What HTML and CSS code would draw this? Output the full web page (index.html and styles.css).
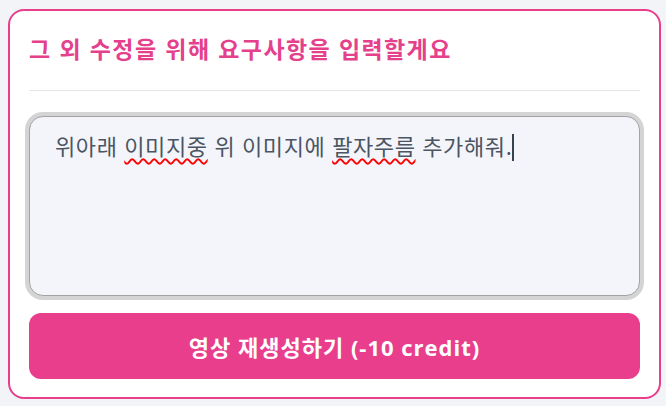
FILE: index.html
```html
<!DOCTYPE html>
<html lang="ko">
<head>
<meta charset="utf-8">
<link rel="stylesheet" href="styles.css">
</head>
<body>
<div class="card">
  <div class="header">
    <h2 class="title">그 외 수정을 위해 요구사항을 입력할게요</h2>
  </div>
  <div class="field">
    <div class="input">위아래 <span class="misspell">이미지중</span> 위 이미지에 <span class="misspell">팔자주름</span> 추가해줘.<span class="caret"></span></div>
  </div>
  <button class="submit">영상 재생성하기 (-10 credit)</button>
</div>
</body>
</html>
```
FILE: styles.css
```css
* { box-sizing: border-box; }
html, body { margin: 0; padding: 0; }
body {
  background: #f3f4f8;
  padding: 9px 5px 0 8px;
  font-family: "Noto Sans CJK KR", "Noto Sans", sans-serif;
}
.card {
  width: 653px;
  height: 390px;
  background: #ffffff;
  border: 2px solid #e83e8c;
  border-radius: 16px;
  padding: 0 19px 18px 19px;
  display: flex;
  flex-direction: column;
}
.header {
  padding: 22px 0 27px 0;
  border-bottom: 1px solid #e5e7eb;
}
.title {
  margin: 0;
  font-size: 23px;
  line-height: 30px;
  font-weight: 700;
  letter-spacing: 1.4px;
  color: #e5408b;
}
.field {
  margin-top: 25px;
}
.input {
  height: 180px;
  background: #f4f5fa;
  border: 1px solid #a3a3a3;
  border-radius: 14px;
  box-shadow: 0 0 0 4px #d4d4d4;
  padding: 14px 25px;
  font-size: 22px;
  line-height: 28px;
  letter-spacing: 0.6px;
  color: #4b5563;
}
.misspell {
  text-decoration: underline wavy #ff0000;
  text-decoration-thickness: 1.5px;
  text-underline-offset: 3px;
}
.caret {
  display: inline-block;
  width: 2px;
  height: 27px;
  background: #374151;
  vertical-align: -6px;
  margin-left: 0;
}
.submit {
  margin-top: 17px;
  height: 66px;
  width: 100%;
  border: none;
  border-radius: 12px;
  background: #e83e8c;
  color: #ffffff;
  font-family: "Open Sans", "Noto Sans CJK KR", sans-serif;
  font-size: 22px;
  font-weight: 700;
  letter-spacing: 1px;
}
```
